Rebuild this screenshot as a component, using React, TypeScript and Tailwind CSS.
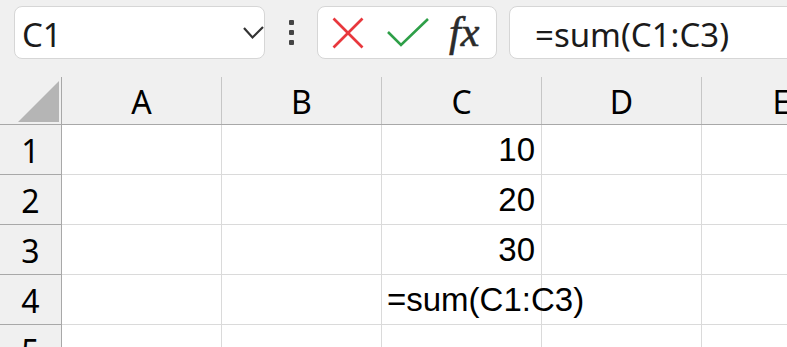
import React from "react";

const cols = ["A", "B", "C", "D", "E"];
const rows = [1, 2, 3, 4, 5];

const cellValue = (r: number, c: string) => {
  if (c === "C" && r === 1) return { v: "10", right: true };
  if (c === "C" && r === 2) return { v: "20", right: true };
  if (c === "C" && r === 3) return { v: "30", right: true };
  if (c === "C" && r === 4) return { v: "=sum(C1:C3)", right: false };
  return null;
};

export default function App() {
  return (
    <div
      className="w-[787px] h-[347px] overflow-hidden bg-[#f0f0f0] text-[#1a1a1a]"
      style={{ fontFamily: '"Noto Sans", "Open Sans", sans-serif' }}
    >
      {/* Toolbar */}
      <div className="h-[77px] pt-[6px] flex items-start">
        {/* Name box */}
        <div className="ml-[14px] w-[251px] shrink-0 h-[53px] rounded-[8px] border border-[#d6d6d6] bg-white flex items-center pl-[7px] pr-0 overflow-hidden">
          <span className="flex-1 text-[33px] leading-none pt-[3px] text-[#1b1b1b]">C1</span>
          <svg width="21" height="14" viewBox="0 0 21 14" className="mt-[1px]">
            <polyline points="1,2 9.5,11.5 20,1" fill="none" stroke="#333" strokeWidth="2.2" />
          </svg>
        </div>
        {/* Dots */}
        <div className="w-[52px] shrink-0 h-[53px] flex flex-col items-center pt-[14px] gap-[5px]">
          <div className="w-[5px] h-[5px] bg-[#444] rounded-[1px]" />
          <div className="w-[5px] h-[5px] bg-[#444] rounded-[1px]" />
          <div className="w-[5px] h-[5px] bg-[#444] rounded-[1px]" />
        </div>
        {/* Cancel / Enter / fx */}
        <div className="w-[180px] shrink-0 h-[53px] rounded-[8px] border border-[#d6d6d6] bg-white flex items-center pl-[14px]">
          <svg width="32" height="32" viewBox="0 0 32 32" className="shrink-0">
            <line x1="1.5" y1="1.5" x2="30.5" y2="30.5" stroke="#e8383d" strokeWidth="2.6" />
            <line x1="30.5" y1="1.5" x2="1.5" y2="30.5" stroke="#e8383d" strokeWidth="2.6" />
          </svg>
          <svg width="42" height="30" viewBox="0 0 42 30" className="ml-[23px] mt-[1px] shrink-0">
            <polyline points="1,14 14,27 41,1" fill="none" stroke="#2e9f48" strokeWidth="2.6" />
          </svg>
          <span
            className="ml-[20px] text-[42px] leading-none italic text-[#2b2b2b] pb-[2px] [-webkit-text-stroke:0.6px_#2b2b2b]"
            style={{ fontFamily: '"Liberation Serif", "DejaVu Serif", serif' }}
          >
            fx
          </span>
        </div>
        {/* Formula box */}
        <div className="ml-[12px] w-[300px] shrink-0 h-[53px] rounded-[8px] border border-[#d6d6d6] bg-white flex items-center pl-[25px]">
          <span className="text-[33px] leading-none pt-[3px] whitespace-nowrap text-[#1b1b1b]">=sum(C1:C3)</span>
        </div>
      </div>

      {/* Header row */}
      <div className="flex h-[48px] border-b border-[#a8a8a8] bg-[#f0f0f0]">
        <div className="w-[62px] shrink-0 h-full border-r border-[#a8a8a8] flex items-end pb-[2px] pl-[18px]">
          <svg width="41" height="41" viewBox="0 0 41 41">
            <polygon points="41,0 41,41 0,41" fill="#b5b5b5" />
          </svg>
        </div>
        {cols.map((c) => (
          <div
            key={c}
            className="w-[160px] shrink-0 h-full border-r border-[#c6c6c6] flex items-center justify-center text-[32px] leading-none text-black"
          >
            <span className="pt-[2px]">{c}</span>
          </div>
        ))}
      </div>

      {/* Rows */}
      {rows.map((r) => (
        <div key={r} className="flex h-[50px] bg-white">
          <div className="w-[62px] shrink-0 h-full border-r border-b border-[#a8a8a8] bg-[#f0f0f0] flex items-center justify-center text-[32px] leading-none text-black">
            <span className="pt-[2px]">{r}</span>
          </div>
          {cols.map((c) => {
            const cv = cellValue(r, c);
            return (
              <div
                key={c}
                className={
                  "w-[160px] shrink-0 h-full border-r border-b border-[#dadada] flex items-center text-[33px] leading-none text-black overflow-visible whitespace-nowrap " +
                  (cv && cv.right ? "justify-end pr-[6px]" : "justify-start pl-[5px]")
                }
                style={{ fontFamily: '"Liberation Sans", Arial, sans-serif' }}
              >
                {cv ? <span className="relative z-10">{cv.v}</span> : null}
              </div>
            );
          })}
        </div>
      ))}
    </div>
  );
}
